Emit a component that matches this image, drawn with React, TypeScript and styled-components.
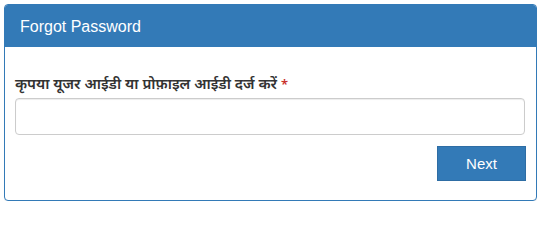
import React from 'react';
import styled, { createGlobalStyle } from 'styled-components';

const GlobalStyle = createGlobalStyle`
  html, body {
    margin: 0;
    padding: 0;
    background: #ffffff;
  }
  body {
    padding: 4px 4px 0 4px;
    font-family: 'Liberation Sans', Arial, 'Noto Sans', sans-serif;
    color: #333333;
  }
`;

const Panel = styled.div`
  width: 531px;
  border: 1px solid #337ab7;
  border-radius: 4px;
  background: #ffffff;
  box-shadow: 0 1px 1px rgba(0, 0, 0, 0.05);
`;

const PanelHeading = styled.div`
  background: #337ab7;
  color: #ffffff;
  padding: 10px 15px;
  height: 22px;
  border-top-left-radius: 3px;
  border-top-right-radius: 3px;
  font-size: 16px;
  line-height: 23px;
`;

const PanelBody = styled.form`
  padding: 26px 10px 19px 10px;
  display: flex;
  flex-direction: column;
`;

const Label = styled.label`
  display: block;
  font-family: 'Noto Sans', 'Liberation Sans', sans-serif;
  font-weight: 600;
  font-size: 15px;
  line-height: 20px;
  margin-bottom: 4px;
`;

const Required = styled.span`
  color: #c9302c;
  font-size: 13px;
  margin-left: 4px;
`;

const Input = styled.input`
  box-sizing: border-box;
  width: 510px;
  height: 37px;
  padding: 6px 12px;
  border: 1px solid #cccccc;
  border-radius: 4px;
  font-size: 14px;
  outline: none;
  box-shadow: inset 0 1px 1px rgba(0, 0, 0, 0.075);
`;

const Actions = styled.div`
  display: flex;
  justify-content: flex-end;
  margin-top: 11px;
`;

const Button = styled.button`
  box-sizing: border-box;
  width: 89px;
  height: 35px;
  background: #337ab7;
  border: 1px solid #2e6da4;
  border-radius: 0;
  color: #ffffff;
  font-family: 'Liberation Sans', Arial, sans-serif;
  font-size: 15px;
  cursor: pointer;
`;

export default function App() {
  return (
    <>
      <GlobalStyle />
      <Panel>
        <PanelHeading>Forgot Password</PanelHeading>
        <PanelBody onSubmit={(e) => e.preventDefault()}>
          <Label>
            कृपया यूजर आईडी या प्रोफ़ाइल आईडी दर्ज करें
            <Required>*</Required>
          </Label>
          <Input type="text" />
          <Actions>
            <Button type="submit">Next</Button>
          </Actions>
        </PanelBody>
      </Panel>
    </>
  );
}
